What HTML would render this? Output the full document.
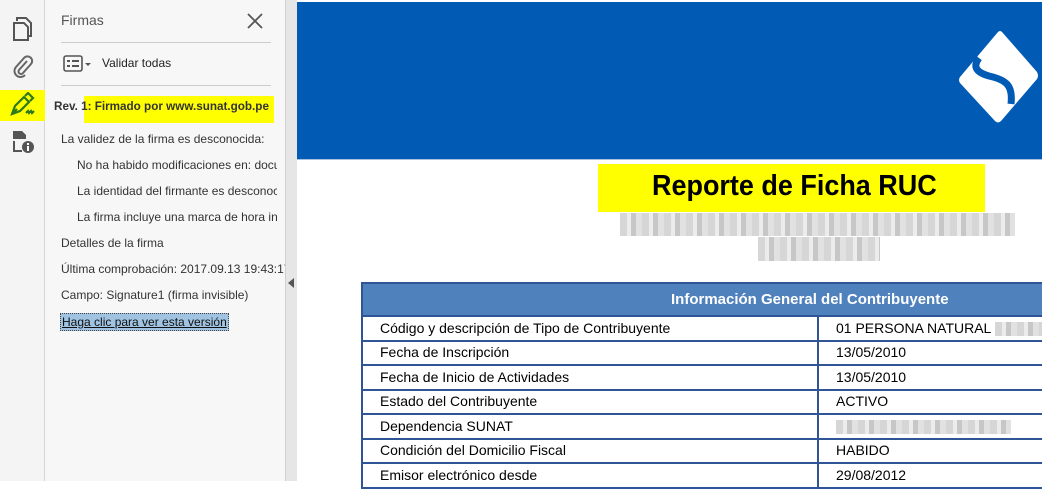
<!DOCTYPE html>
<html><head><meta charset="utf-8"><style>
*{margin:0;padding:0;box-sizing:border-box}
body{width:1042px;height:481px;overflow:hidden;position:relative;background:#fff;font-family:"Liberation Sans",sans-serif}
.abs{position:absolute}
#tb{left:0;top:0;width:45px;height:481px;background:#f4f4f4;border-right:1px solid #d6d6d6}
#panel{left:45px;top:0;width:240px;height:481px;background:#f7f7f7;font-family:"Liberation Sans",sans-serif;color:#333}
#sep{left:285px;top:0;width:12px;height:481px;background:#e6e6e6;border-left:1px solid #d0d0d0}
#doc{left:297px;top:0;width:745px;height:481px;background:#fff}
.p{position:absolute;font-size:12px;white-space:nowrap;overflow:hidden}
table{border-collapse:collapse;position:absolute;left:64px;top:282px;width:700px;font-size:14px;color:#000}
td{border:2px solid #2f5597;height:24.5px;padding:0 0 0 17px;line-height:19px}
th{background:#4f81bd;color:#fff;height:33px;font-size:15px;border:2px solid #2f5597;text-align:left;padding-left:308px;font-weight:bold}
.blur{background:repeating-linear-gradient(90deg,#cfcfcf 0 7px,#e8e8e8 7px 11px,#bdbdbd 11px 16px,#dcdcdc 16px 22px);opacity:.85}
</style></head><body>
<div class="abs" style="left:0;top:0;width:1042px;height:2px;background:#3c4a5a"></div>
<div id="tb" class="abs">
<svg class="abs" style="left:12px;top:17px" width="22" height="24" viewBox="0 0 22 24" fill="none" stroke="#555" stroke-width="2"><path d="M5 4V1h9l5 5v13h-4"/><path d="M2 6h10l4 4v13H2z"/></svg>
<svg class="abs" style="left:12px;top:55px" width="22" height="24" viewBox="0 0 22 24" fill="none" stroke="#666" stroke-width="2"><path d="M15 6L7 15a2.5 2.5 0 0 0 4 3l8-9a4.5 4.5 0 0 0-7-6L4 12a6 6 0 0 0 9 8"/></svg>
<div class="abs" style="left:0;top:90px;width:45px;height:31px;background:#ffff00"></div>
<svg class="abs" style="left:8px;top:92px" width="30" height="26" viewBox="0 0 30 26" fill="none" stroke="#2d7a1a" stroke-width="2.2"><path d="M4 22l3-8 9-9 5 5-9 9z"/><path d="M17 4l3-3 5 5-3 3"/><path d="M4 22l5-5"/><path d="M18 21l2-2 1 2 2-2 1 2 2-2"/></svg>
<svg class="abs" style="left:11px;top:130px" width="24" height="24" viewBox="0 0 24 24"><path d="M2 1h9l4 4v4H2z" fill="#555"/><path d="M3 11v10h8" fill="none" stroke="#555" stroke-width="2"/><circle cx="17" cy="17" r="6" fill="#555"/><rect x="16" y="16" width="2" height="5" fill="#fff"/><rect x="16" y="13" width="2" height="2" fill="#fff"/></svg>
</div>
<div id="panel" class="abs">
<div class="p" style="left:16px;top:12px;font-size:14px;color:#555">Firmas</div>
<svg class="abs" style="left:202px;top:13px" width="16" height="16"><path d="M1 1l14 14M15 1L1 15" stroke="#555" stroke-width="1.8"/></svg>
<div class="abs" style="left:16px;top:42px;width:210px;height:1px;background:#ccc"></div>
<svg class="abs" style="left:18px;top:55px" width="30" height="18"><rect x="1" y="1" width="18" height="15" rx="2" fill="none" stroke="#555" stroke-width="1.6"/><rect x="4" y="5" width="3" height="2" fill="#555"/><rect x="4" y="10" width="3" height="2" fill="#555"/><rect x="9" y="5" width="7" height="2" fill="#555"/><rect x="9" y="10" width="7" height="2" fill="#555"/><path d="M22 8h6l-3 3z" fill="#555"/></svg>
<div class="p" style="left:57px;top:56px;color:#222">Validar todas</div>
<div class="abs" style="left:16px;top:85px;width:210px;height:1px;background:#ccc"></div>
<div class="abs" style="left:39px;top:96px;width:190px;height:27px;background:#ffff00"></div>
<div class="p" style="left:9px;top:100px;font-weight:bold;color:#333;font-size:11.7px">Rev. 1: Firmado por www.sunat.gob.pe</div>
<div class="p" style="left:16px;top:132px;width:224px">La validez de la firma es desconocida:</div>
<div class="p" style="left:32px;top:158px;width:200px">No ha habido modificaciones en: documento</div>
<div class="p" style="left:32px;top:184px;width:200px">La identidad del firmante es desconocida</div>
<div class="p" style="left:32px;top:210px;width:200px">La firma incluye una marca de hora incrustada</div>
<div class="p" style="left:16px;top:236px">Detalles de la firma</div>
<div class="p" style="left:16px;top:262px;width:224px">Última comprobación: 2017.09.13 19:43:17</div>
<div class="p" style="left:16px;top:288px">Campo: Signature1 (firma invisible)</div>
<div class="p" style="left:15px;top:313px;background:#9fc3e0;text-decoration:underline;color:#111;padding:1px 1px;border:1px dotted #444">Haga clic para ver esta versión</div>
</div>
<div id="sep" class="abs"><svg class="abs" style="left:2px;top:278px" width="6" height="10"><path d="M6 0L0 5l6 5z" fill="#555"/></svg></div>
<div id="doc" class="abs">
<div class="abs" style="left:0;top:2px;width:745px;height:157px;background:#015bb5"></div>
<div class="abs" style="left:0;top:159px;width:745px;height:1px;background:#a9c0dc"></div>
<svg class="abs" style="left:655px;top:28px" width="90" height="100" viewBox="655 28 90 100">
<path d="M701 32Q703 30 705 32L740 72Q742 76 740 79L704 121Q701 124 698 121L663 83Q661 80 663 77Z" fill="#fff"/>
<path d="M682 58C676 66 678 72 692 76C710 80 716 86 714 104" fill="none" stroke="#015bb5" stroke-width="7"/>
</svg>
<div class="abs" style="left:301px;top:164px;width:387px;height:48px;background:#ffff00"></div>
<div class="abs" style="left:355px;top:170px;font-size:29px;font-weight:bold;color:#000;transform:scaleX(.93);transform-origin:left">Reporte de Ficha RUC</div>
<div class="abs blur" style="left:323px;top:213px;width:395px;height:23px"></div>
<div class="abs blur" style="left:461px;top:237px;width:122px;height:24px"></div>
<table>
<tr><th colspan="2">Información General del Contribuyente</th></tr>
<tr><td style="width:456px">Código y descripción de Tipo de Contribuyente</td><td>01 PERSONA NATURAL <span class="blur" style="display:inline-block;width:60px;height:14px;vertical-align:middle"></span></td></tr>
<tr><td>Fecha de Inscripción</td><td>13/05/2010</td></tr>
<tr><td>Fecha de Inicio de Actividades</td><td>13/05/2010</td></tr>
<tr><td>Estado del Contribuyente</td><td>ACTIVO</td></tr>
<tr><td>Dependencia SUNAT</td><td><span class="blur" style="display:inline-block;width:175px;height:14px;vertical-align:middle"></span></td></tr>
<tr><td>Condición del Domicilio Fiscal</td><td>HABIDO</td></tr>
<tr><td>Emisor electrónico desde</td><td>29/08/2012</td></tr>
</table>
</div>
</body></html>
